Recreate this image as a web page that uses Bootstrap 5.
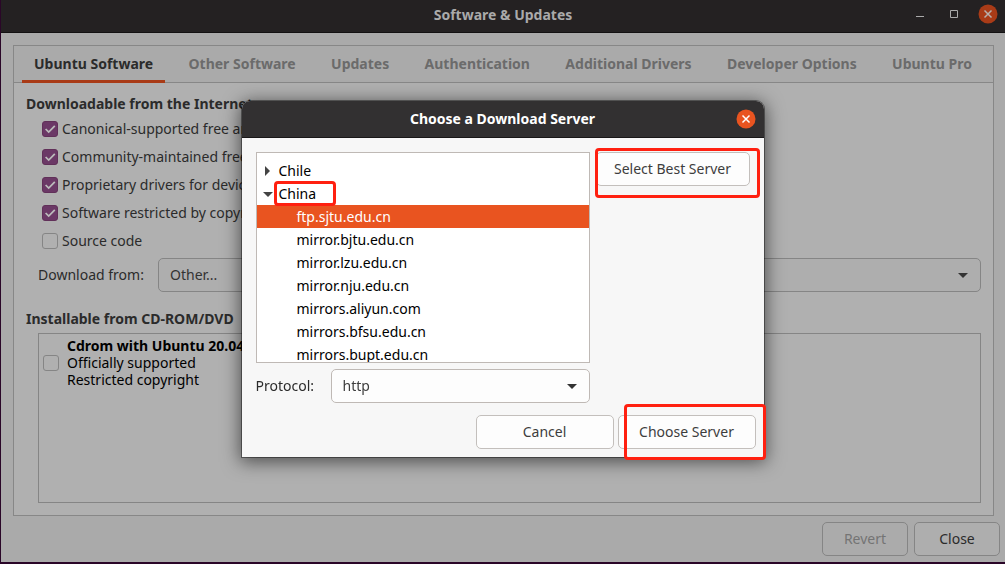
<!DOCTYPE html>
<html lang="en">
<head>
<meta charset="utf-8">
<meta name="viewport" content="width=device-width, initial-scale=1">
<title>Software &amp; Updates</title>
<link href="https://cdn.jsdelivr.net/npm/bootstrap@5.3.0/dist/css/bootstrap.min.css" rel="stylesheet">
<style>
  body { font-family: "Noto Sans", sans-serif; font-size: 14px; line-height: 20px; color: #2b2b2b; background: #2a0628; }
  .desktop { padding: 0 0 2px 1px; }
  .app-window { background: #aaa; }
  .titlebar { position: relative; height: 33px; padding-bottom: 3px; background: #242122; border-bottom: 1px solid #131112; color: #aaa; }
  .win-controls { position: absolute; right: 7px; top: 4px; gap: 14px; }
  .win-btn { display: flex; padding: 0; border: 0; background: none; color: inherit; }
  .notebook { margin: 12px 11px 6px 12px; border: 1px solid #878787; background: #b0b0b0; }
  .tab-strip { height: 37px; padding: 0 9px 0 8px; background: #aaa; border-bottom: 1px solid #878787; }
  .tab-strip a { height: 37px; padding: 8px 12px 0; font-weight: 700; color: #6b6b6b; text-decoration: none; white-space: nowrap; border-bottom: 3px solid transparent; }
  .tab-strip a.active { color: #2b2b2b; border-color: #a93b17; }
  .page { padding: 11px 12px 12px; }
  .page h2, .modal-title { font-size: 14px; line-height: 20px; font-weight: 700; margin: 0; }
  .options { padding-top: 1px; margin-bottom: 3px; }
  .option { min-height: 28px; padding-left: 16px; white-space: nowrap; }
  .from-row { margin-bottom: 17px; }
  .from-label { width: 120px; }
  .form-check-input.tick { width: 16px; height: 16px; margin: 0; border: 1px solid #858585; border-radius: 3px; background-color: #b0b0b0; flex: none; }
  .form-check-input.tick:checked { border-color: #613059; background-color: #6b3866;
    background-image: url("data:image/svg+xml,%3csvg xmlns='http://www.w3.org/2000/svg' viewBox='0 0 16 16'%3e%3cpath fill='none' stroke='%23bbb' stroke-width='2' d='M3 8l3.5 3.5L13.5 4.5'/%3e%3c/svg%3e"); }
  .form-select.combo { height: 34px; padding: 0 36px 0 11px; font-size: 14px; line-height: 20px; color: #3d3d3d; border: 1px solid #bfb9b5; border-radius: 5px; background-color: #fdfdfd;
    background-image: url("data:image/svg+xml,%3csvg xmlns='http://www.w3.org/2000/svg' viewBox='0 0 10 5'%3e%3cpath fill='%23333' d='M0 0h10L5 5z'/%3e%3c/svg%3e");
    background-size: 10px 5px; background-position: right 12px center; }
  .form-select.combo.dim { color: #333; border-color: #858585; background-color: #aeaeae; }
  .sources { margin-left: 12px; padding: 3px 4px; border: 1px solid #858585; color: #000; line-height: 17px; white-space: nowrap; }
  .act { height: 34px; padding: 0; font-size: 14px; line-height: 20px; color: #3d3d3d; background: #fdfdfd; border: 1px solid #c3bfbc; border-radius: 5px; }
  .act.dim { width: 86px; color: #2b2b2b; background: #aeaeae; border-color: #858585; }
  .act.dim:disabled { color: #747474; background: #ababab; border-color: #858585; opacity: 1; }
  .action-row { padding: 0 5px 6px; gap: 6px; }
  .dialog-layer { position: fixed; inset: 0; padding-bottom: 6px; }
  .server-dialog { width: 522px; background: #f7f7f7; border-radius: 8px 8px 0 0; box-shadow: 0 0 0 1px rgba(0,0,0,.4), 0 3px 18px 2px rgba(0,0,0,.55); }
  .dialog-head { position: relative; height: 37px; background: #323031; color: #fff; border-radius: 8px 8px 0 0; border-bottom: 1px solid #191718; }
  .dialog-head .win-btn { position: absolute; right: 8px; top: 8px; }
  .dialog-body { padding: 14px 8px 8px 14px; }
  .server-row { gap: 6px; }
  .tree { height: 211px; overflow: hidden; padding: 6px 0; border: 1px solid #bfb9b5; background: #fff; color: #000; }
  .tree li { line-height: 23px; height: 23px; }
  .tree .country { padding-left: 6px; gap: 6px; }
  .tree .country svg { width: 10px; height: 10px; flex: none; }
  .tree .server { padding-left: 40px; }
  .tree .chosen { background: #e95420; color: #fff; }
  .left-col { width: 334px; }
  .protocol-row { margin-top: 6px; }
  .combo.protocol { width: 259px; }
  .best { width: 154px; }
  .answers { margin-top: 12px; }
  .answer { width: 138px; }
  .marked { position: relative; }
  .marked::after { content: ""; position: absolute; border: 3px solid #ff2010; border-radius: 4px; pointer-events: none; }
  .mark-best::after { inset: -4px -10px -12px -1px; }
  .mark-country::after { inset: -1px -20px -1px -5px; }
  .mark-choose::after { inset: -11px -10px -11px 6px; }
</style>
</head>
<body>
<div class="desktop vh-100 d-flex">
  <main class="app-window flex-grow-1 d-flex flex-column overflow-hidden">
    <header class="titlebar d-flex align-items-center justify-content-center">
      <h1 class="modal-title">Software &amp; Updates</h1>
      <div class="win-controls d-flex align-items-center">
        <button class="win-btn" aria-label="Minimize"><svg width="20" height="20"><path d="M6 12.500h8" stroke="currentColor"/></svg></button>
        <button class="win-btn" aria-label="Maximize"><svg width="20" height="20"><path d="M6.500 6.500h7v7h-7z" fill="none" stroke="currentColor"/></svg></button>
        <button class="win-btn" aria-label="Close"><svg width="20" height="20"><circle cx="10" cy="10" r="9.500" fill="#a93b17"/><path d="M6.500 6.500l7 7m0-7l-7 7" stroke="#b8b0ad" stroke-width="1.500"/></svg></button>
      </div>
    </header>

    <section class="notebook flex-grow-1 d-flex flex-column">
      <nav class="tab-strip d-flex justify-content-between">
        <a class="active" href="#">Ubuntu Software</a>
        <a href="#">Other Software</a>
        <a href="#">Updates</a>
        <a href="#">Authentication</a>
        <a href="#">Additional Drivers</a>
        <a href="#">Developer Options</a>
        <a href="#">Ubuntu Pro</a>
      </nav>
      <div class="page flex-grow-1 d-flex flex-column">
        <h2>Downloadable from the Internet</h2>
        <div class="options">
          <div class="option d-flex align-items-center gap-1"><input class="form-check-input tick" type="checkbox" id="main" checked><label for="main">Canonical-supported free and</label></div>
          <div class="option d-flex align-items-center gap-1"><input class="form-check-input tick" type="checkbox" id="universe" checked><label for="universe">Community-maintained free</label></div>
          <div class="option d-flex align-items-center gap-1"><input class="form-check-input tick" type="checkbox" id="restricted" checked><label for="restricted">Proprietary drivers for devices</label></div>
          <div class="option d-flex align-items-center gap-1"><input class="form-check-input tick" type="checkbox" id="multiverse" checked><label for="multiverse">Software restricted by copyright</label></div>
          <div class="option d-flex align-items-center gap-1"><input class="form-check-input tick" type="checkbox" id="source"><label for="source">Source code</label></div>
        </div>
        <div class="from-row d-flex align-items-center ps-2 ms-1">
          <label class="from-label flex-shrink-0" for="from">Download from:</label>
          <select class="form-select combo dim" id="from"><option>Other...</option></select>
        </div>
        <h2 class="mb-1">Installable from CD-ROM/DVD</h2>
        <div class="sources flex-grow-1">
          <div class="d-flex align-items-center gap-2">
            <input class="form-check-input tick" type="checkbox" id="cdrom">
            <label for="cdrom"><strong>Cdrom with Ubuntu 20.04</strong><br>Officially supported<br>Restricted copyright</label>
          </div>
        </div>
      </div>
    </section>
    <footer class="action-row d-flex justify-content-end">
      <button class="btn act dim" disabled>Revert</button>
      <button class="btn act dim">Close</button>
    </footer>
  </main>
</div>

<div class="dialog-layer d-flex align-items-center justify-content-center">
  <section class="server-dialog" role="dialog" aria-labelledby="dialog-title">
    <header class="dialog-head d-flex align-items-center justify-content-center">
      <h2 class="modal-title" id="dialog-title">Choose a Download Server</h2>
      <button class="win-btn" aria-label="Close"><svg width="20" height="20"><circle cx="10" cy="10" r="9.500" fill="#e95420"/><path d="M6.500 6.500l7 7m0-7l-7 7" stroke="#fff" stroke-width="1.500"/></svg></button>
    </header>
    <div class="dialog-body">
      <div class="server-row d-flex align-items-start">
        <div class="left-col">
          <ul class="tree list-unstyled mb-0">
            <li class="country d-flex align-items-center"><svg><path d="M2 0l5 5-5 5z" fill="#444"/></svg><span>Chile</span></li>
            <li class="country d-flex align-items-center"><svg><path d="M0 3h10L5 8z" fill="#444"/></svg><span class="marked mark-country">China</span></li>
            <li class="server chosen">ftp.sjtu.edu.cn</li>
            <li class="server">mirror.bjtu.edu.cn</li>
            <li class="server">mirror.lzu.edu.cn</li>
            <li class="server">mirror.nju.edu.cn</li>
            <li class="server">mirrors.aliyun.com</li>
            <li class="server">mirrors.bfsu.edu.cn</li>
            <li class="server">mirrors.bupt.edu.cn</li>
          </ul>
          <div class="protocol-row d-flex align-items-center justify-content-between">
            <label for="protocol">Protocol:</label>
            <select class="form-select combo protocol" id="protocol"><option>http</option></select>
          </div>
        </div>
        <div class="marked mark-best"><button class="btn act best">Select Best Server</button></div>
      </div>
      <div class="answers d-flex justify-content-end gap-1">
        <button class="btn act answer">Cancel</button>
        <div class="marked mark-choose"><button class="btn act answer">Choose Server</button></div>
      </div>
    </div>
  </section>
</div>
<script src="https://cdn.jsdelivr.net/npm/bootstrap@5.3.0/dist/js/bootstrap.bundle.min.js"></script>
</body>
</html>
